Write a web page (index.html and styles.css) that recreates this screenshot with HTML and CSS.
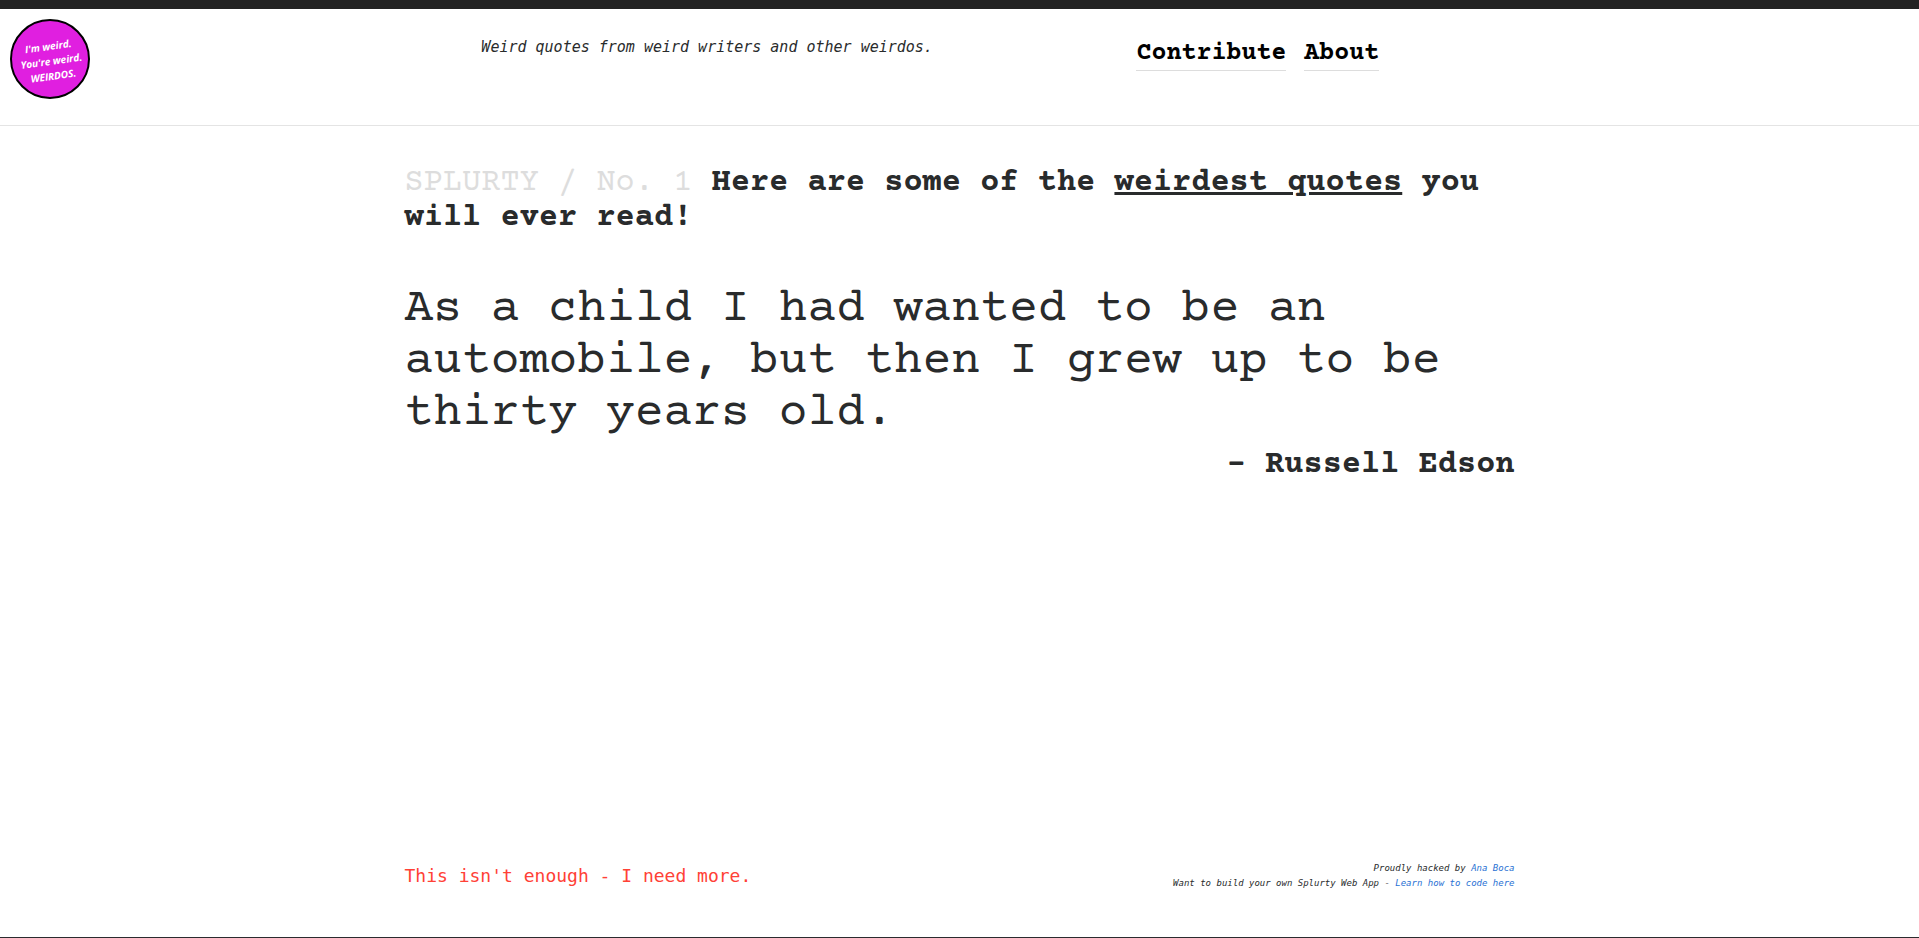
FILE: index.html
```html
<!DOCTYPE html>
<html lang="en">
<head>
<meta charset="utf-8">
<title>Splurty</title>
<link rel="stylesheet" href="styles.css">
</head>
<body class="page">
<header class="header">
  <a class="logo" href="#" aria-label="Weirdos home">
    <svg class="logo-badge" viewBox="0 0 80 80">
      <circle cx="40" cy="40" r="39" fill="#e01fe0" stroke="#000" stroke-width="2"/>
      <g class="logo-text" transform="rotate(-8 40 40)">
        <text x="40" y="31">I'm weird.</text>
        <text x="41" y="46">You're weird.</text>
        <text x="41" y="61">WEIRDOS.</text>
      </g>
    </svg>
  </a>
  <p class="tagline">Weird quotes from weird writers and other weirdos.</p>
  <nav class="nav">
    <a class="nav-link" href="#">Contribute</a>
    <a class="nav-link" href="#">About</a>
  </nav>
</header>
<main class="container main">
  <h1 class="title"><span class="issue">SPLURTY / No. 1</span> Here are some of the <u>weirdest quotes</u> you will ever read!</h1>
  <blockquote class="quote">
    <p class="quote-text">As a child I had wanted to be an automobile, but then I grew up to be thirty years old.</p>
    <footer class="author">– Russell Edson</footer>
  </blockquote>
</main>
<footer class="container footer">
  <a class="more" href="#">This isn't enough - I need more.</a>
  <p class="credits">Proudly hacked by <a class="credit-link" href="#">Ana Boca</a><br>Want to build your own Splurty Web App - <a class="credit-link" href="#">Learn how to code here</a></p>
</footer>
</body>
</html>
```

FILE: styles.css
```css
* {
  box-sizing: border-box;
}

.page {
  display: flex;
  flex-direction: column;
  min-height: 100vh;
  margin: 0;
  border-top: 9px solid #222;
  border-bottom: 1px solid #2b2b2e;
  background: #fff;
  color: #292b2c;
  font-family: "Courier Prime", "Liberation Mono", monospace;
}

.header {
  display: grid;
  grid-template-columns: 225fr 287fr 287fr 201fr;
  align-items: start;
  padding: 10px 0 26px;
  border-bottom: 1px solid #e4e4e4;
}

.logo {
  display: block;
  width: 80px;
  height: 80px;
  margin-left: 10px;
}

.logo-badge {
  display: block;
  width: 100%;
}

.logo-text {
  fill: #fff;
  font: italic 700 10px "Open Sans", "Noto Sans", sans-serif;
  text-anchor: middle;
}

.tagline {
  margin: 0;
  padding-top: 16px;
  font: italic 15px/24px Consolas, "DejaVu Sans Mono", monospace;
  text-align: center;
  white-space: nowrap;
}

.nav {
  display: flex;
  justify-content: center;
  gap: 18px;
  padding-top: 20px;
}

.nav-link {
  padding-bottom: 1px;
  border-bottom: 1px solid #ddd;
  color: #000;
  font-size: 25px;
  font-weight: 700;
  line-height: 30px;
  text-decoration: none;
}

.container {
  width: 100%;
  max-width: 1140px;
  margin: 0 auto;
  padding: 0 15px;
}

.main {
  flex: 1;
  padding-top: 40px;
}

.title {
  margin: 0 0 47px;
  font-size: 32px;
  line-height: 35px;
}

.issue {
  color: #ddd;
  font-weight: 400;
}

.quote {
  margin: 0;
}

.quote-text {
  margin: 0 0 9px;
  font-size: 48px;
  line-height: 52px;
}

.author {
  font-size: 32px;
  font-weight: 700;
  line-height: 35px;
  text-align: right;
}

.footer {
  display: flex;
  justify-content: space-between;
  align-items: flex-start;
  padding-bottom: 46px;
  font-family: Consolas, "DejaVu Sans Mono", monospace;
}

.more {
  color: #ff4136;
  font-size: 18px;
  line-height: 30px;
  text-decoration: none;
}

.credits {
  margin: 0;
  font-size: 9px;
  font-style: italic;
  line-height: 15px;
  text-align: right;
}

.credit-link {
  color: #2a72d4;
  text-decoration: none;
}
```
